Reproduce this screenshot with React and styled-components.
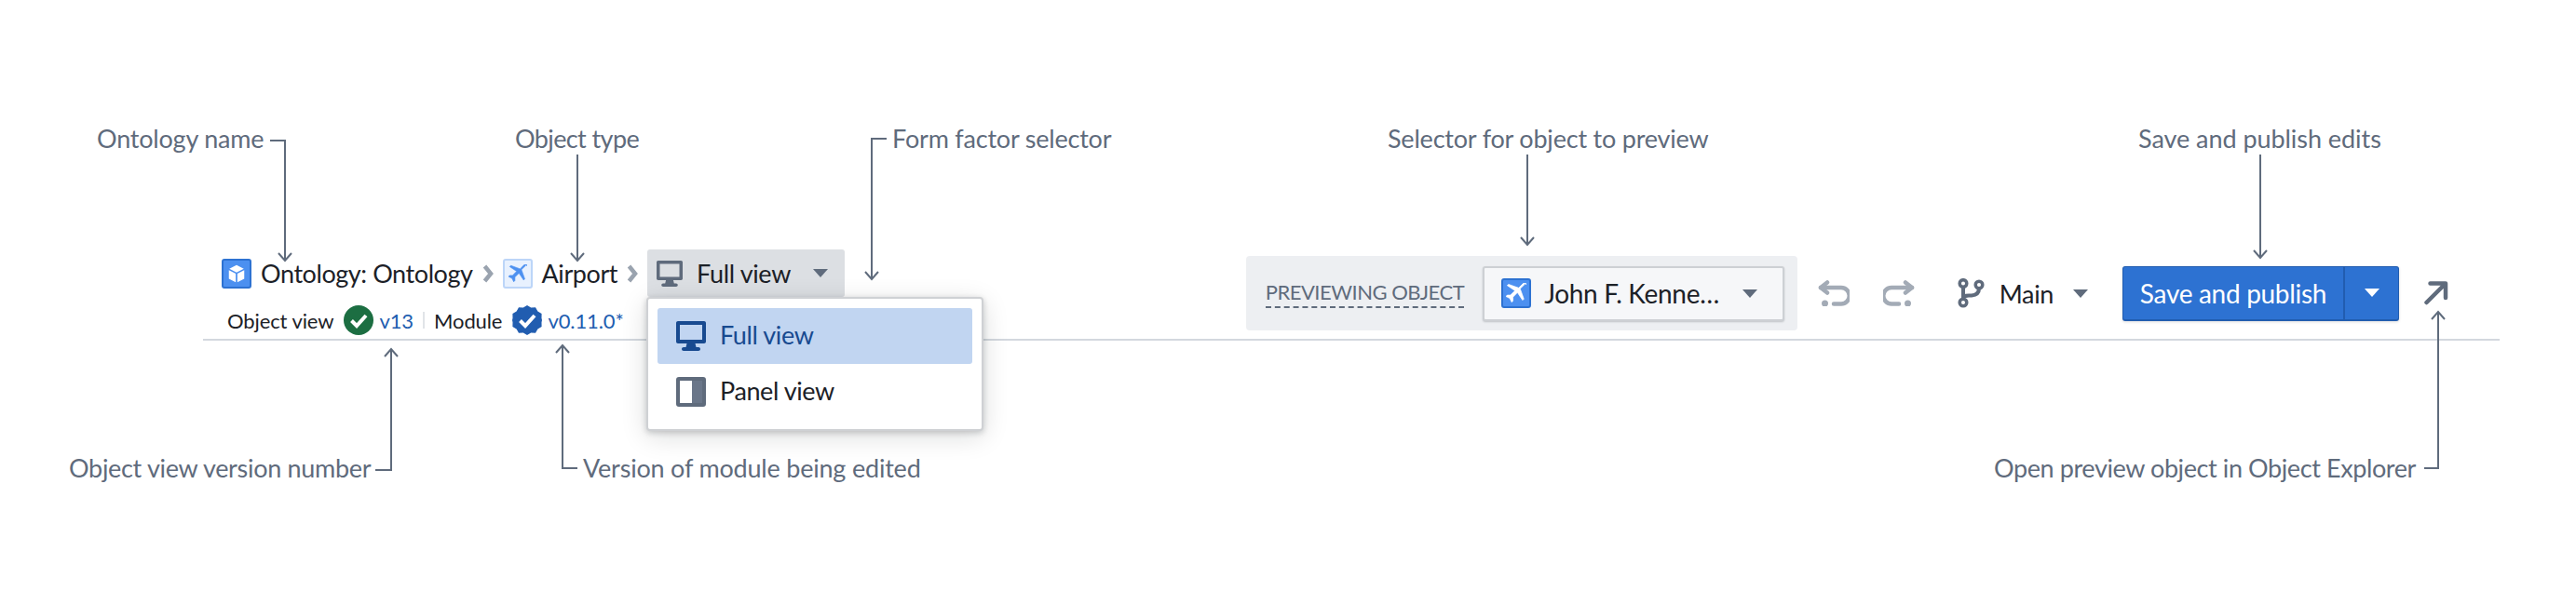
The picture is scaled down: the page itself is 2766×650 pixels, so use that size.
import React from "react";
import styled, { createGlobalStyle } from "styled-components";

const Global = createGlobalStyle`
  html, body { margin: 0; padding: 0; background: #fff; }
  body { font-family: "Lato", "Noto Sans", sans-serif; color: #1c2127; }
`;

const Stage = styled.div`
  position: relative;
  width: 2766px;
  height: 650px;
  overflow: hidden;
  background: #fff;
  padding-top: 268px;
  box-sizing: border-box;
`;

const Toolbar = styled.header`
  display: flex;
  align-items: center;
  justify-content: space-between;
  box-sizing: border-box;
  width: 2466px;
  height: 98px;
  margin-left: 218px;
  padding: 0 55px 0 20px;
  border-bottom: 2px solid #d3d8de;
`;

const LeftColumn = styled.div`
  position: relative;
  display: flex;
  flex-direction: column;
  height: 100%;
`;

const Crumbs = styled.div`
  display: flex;
  align-items: center;
  height: 51px;
`;

const Crumb = styled.span`
  font-size: 27px;
  margin-left: 10px;
  letter-spacing: -0.42px;
  white-space: nowrap;
`;

const Chevron = styled.svg`
  width: 12px;
  height: 20px;
  margin: 0 10px 0 10px;
  flex: none;
`;

const ObjectIcon = styled.span`
  display: inline-flex;
  align-items: center;
  justify-content: center;
  flex: none;
  box-sizing: border-box;
  width: 32px;
  height: 32px;
  border-radius: 3px;
  background: ${(p) => (p.$light ? "#e8f1fe" : "#4c90f0")};
  border: 2px solid ${(p) => (p.$light ? "#bcd5f8" : "#2d72d2")};
  svg { display: block; }
`;

const FormButton = styled.div`
  display: flex;
  align-items: center;
  box-sizing: border-box;
  width: 212px;
  height: 51px;
  padding-left: 10px;
  border-radius: 3px;
  background: #dcdfe3;
  font-size: 27px;
  letter-spacing: -0.35px;
`;

const FormLabel = styled.span`
  margin-left: 15px;
  margin-right: 24px;
  white-space: nowrap;
`;

const Caret = styled.i`
  display: block;
  flex: none;
  width: 0;
  height: 0;
  border-left: 8.5px solid transparent;
  border-right: 8.5px solid transparent;
  border-top: 9px solid ${(p) => p.$color || "#5f6b7c"};
`;

const Meta = styled.div`
  display: flex;
  align-items: center;
  height: 32px;
  margin-top: 9px;
  padding-left: 6px;
  font-size: 22px;
  letter-spacing: -0.1px;
  white-space: nowrap;
`;

const MetaIcon = styled.svg`
  width: 32px;
  height: 32px;
  margin: 0 6px 0 11px;
  flex: none;
`;

const Version = styled.span`
  color: #215db0;
`;

const MetaRule = styled.span`
  width: 2px;
  height: 18px;
  margin: 0 10px;
  background: #e1e4e8;
`;

const Menu = styled.div`
  position: absolute;
  left: 456px;
  top: 51px;
  box-sizing: border-box;
  width: 362px;
  height: 144px;
  padding: 10px;
  border-radius: 4px;
  background: #fff;
  border: 2px solid #cfd1d4;
  box-shadow: 0 2px 6px rgba(17, 20, 24, 0.2), 0 6px 28px rgba(17, 20, 24, 0.14);
`;

const MenuItem = styled.div`
  display: flex;
  align-items: center;
  box-sizing: border-box;
  height: 60px;
  padding-left: 20px;
  gap: 15px;
  border-radius: 3px;
  font-size: 27px;
  letter-spacing: -0.4px;
  color: ${(p) => (p.$active ? "#184a90" : "#1c2127")};
  background: ${(p) => (p.$active ? "#c1d5f1" : "transparent")};
`;

const MenuLabel = styled.span`
  margin-bottom: 3px;
`;

const RightGroup = styled.div`
  display: flex;
  align-items: center;
  height: 100%;
  padding-bottom: 2px;
  box-sizing: border-box;
`;

const Preview = styled.div`
  display: flex;
  align-items: center;
  box-sizing: border-box;
  width: 592px;
  height: 80px;
  padding: 0 14px 0 21px;
  border-radius: 4px;
  background: #edeff2;
`;

const PreviewLabel = styled.span`
  font-size: 22px;
  color: #5f6b7c;
  letter-spacing: -0.5px;
  white-space: nowrap;
  border-bottom: 2px dashed #5f6b7c;
  padding-bottom: 2px;
  margin-right: 20px;
`;

const ObjectSelect = styled.div`
  display: flex;
  align-items: center;
  flex: 1;
  box-sizing: border-box;
  height: 59px;
  padding: 0 27px 0 18px;
  border-radius: 3px;
  background: #f6f7f9;
  border: 2px solid #cdd0d4;
  box-shadow: 0 1px 2px rgba(17, 20, 24, 0.2);
`;

const SelectValue = styled.span`
  flex: 1;
  margin-left: 14px;
  font-size: 28px;
  letter-spacing: -0.3px;
  white-space: nowrap;
`;

const HistoryIcon = styled.svg`
  width: 34px;
  height: 28px;
  margin-left: ${(p) => p.$gap}px;
  flex: none;
`;

const BranchIcon = styled.svg`
  width: 29px;
  height: 32px;
  margin-left: 46px;
  flex: none;
`;

const BranchLabel = styled.span`
  margin: 0 21px 0 16px;
  font-size: 27px;
  letter-spacing: -0.35px;
`;

const SaveButton = styled.div`
  display: flex;
  align-items: stretch;
  box-sizing: border-box;
  width: 297px;
  height: 59px;
  margin-left: 37px;
  border-radius: 3px;
  background: #2d72d2;
  border: 1px solid #215db0;
  border-bottom-width: 2px;
  color: #fff;
  font-size: 28px;
  letter-spacing: -0.3px;
  box-shadow: 0 1px 3px rgba(17, 20, 24, 0.15);
`;

const SaveLabel = styled.span`
  display: flex;
  align-items: center;
  justify-content: center;
  width: 236px;
  border-right: 2px solid #215db0;
  white-space: nowrap;
`;

const SaveCaret = styled.span`
  display: flex;
  align-items: center;
  justify-content: center;
  flex: 1;
`;

const OpenIcon = styled.svg`
  width: 26px;
  height: 26px;
  margin-left: 27px;
  flex: none;
`;

const Notes = styled.svg`
  position: absolute;
  left: 0;
  top: 0;
  width: 2766px;
  height: 650px;
  pointer-events: none;
`;

const Note = styled.span`
  position: absolute;
  left: ${(p) => p.$x}px;
  top: ${(p) => p.$y}px;
  font-size: 27px;
  line-height: 32px;
  color: #5f6b7c;
  letter-spacing: ${(p) => p.$track ?? -0.2}px;
  white-space: nowrap;
`;

const Desktop = ({ size, color }) => (
  <svg width={size} height={size} viewBox="0 0 16 16" fill={color} style={{ flex: "none" }}>
    <path d="M15 0H1C.45 0 0 .45 0 1v10c0 .55.45 1 1 1h4.75l-.5 2H4c-.55 0-1 .45-1 1s.45 1 1 1h8c.55 0 1-.45 1-1s-.45-1-1-1h-1.25l-.5-2H15c.55 0 1-.45 1-1V1c0-.55-.45-1-1-1zm-1 10H2V2h12v8z" />
  </svg>
);

const Plane = ({ size, color }) => (
  <svg width={size} height={size} viewBox="0 0 16 16" fill={color} stroke={color} strokeWidth="0.5">
    <path d="M16 1.5A1.5 1.5 0 0014.5 0c-.4 0-.8.2-1.1.4L10 3.9 2 1 1 2l6 4-3.5 3.5H1L0 10.5l3 1.5 1.5 3 1-1V11L9 7.5l4 6 1-1-2.9-8 3.5-3.4c.2-.3.4-.7.4-1.1z" />
  </svg>
);

const Leader = ({ d }) => (
  <path d={d} fill="none" stroke="#5f6b7c" strokeWidth="2" />
);

const downHead = (x, y) => `M${x - 7} ${y - 8}L${x} ${y}L${x + 7} ${y - 8}`;
const upHead = (x, y) => `M${x - 7} ${y + 8}L${x} ${y}L${x + 7} ${y + 8}`;

const chevron = "M2.5 2L9 10L2.5 18";

export default function App() {
  return (
    <>
      <Global />
      <Stage>
        <Toolbar>
          <LeftColumn>
            <Crumbs>
              <ObjectIcon>
                <svg width="20" height="20" viewBox="0 0 16 16">
                  <path d="M8 .6l6.2 3.2L8 7 1.8 3.8z" fill="#fff" />
                  <path d="M1.4 5l5.9 3v7.3l-5.9-3zM14.6 5L8.7 8v7.3l5.9-3z" fill="#fff" />
                </svg>
              </ObjectIcon>
              <Crumb>Ontology: Ontology</Crumb>
              <Chevron viewBox="0 0 12 20">
                <path d={chevron} fill="none" stroke="#9aa3af" strokeWidth="4.5" />
              </Chevron>
              <ObjectIcon $light>
                <Plane size={20} color="#4c90f0" />
              </ObjectIcon>
              <Crumb>Airport</Crumb>
              <Chevron viewBox="0 0 12 20">
                <path d={chevron} fill="none" stroke="#9aa3af" strokeWidth="4.5" />
              </Chevron>
              <FormButton>
                <Desktop size={28} color="#5f6b7c" />
                <FormLabel>Full view</FormLabel>
                <Caret />
              </FormButton>
            </Crumbs>
            <Meta>
              Object view
              <MetaIcon viewBox="0 0 32 32">
                <circle cx="16" cy="16" r="16" fill="#1c6e42" />
                <path d="M8.500 16.500l5.500 5.500 10-11" fill="none" stroke="#fff" strokeWidth="4" />
              </MetaIcon>
              <Version>v13</Version>
              <MetaRule />
              Module
              <MetaIcon viewBox="0 0 32 32">
                <path
                  d="M16 0l4.200 2.400 4.800-.1 2.400 4.200 4.200 2.400-.1 4.800L32 16l-.5 2.300.1 4.800-4.200 2.400-2.400 4.200-4.800-.1L16 32l-4.200-2.400-4.800.1-2.400-4.200-4.200-2.400.1-4.800L0 16l.5-2.300-.1-4.800 4.200-2.400L7 2.300l4.800.1z"
                  fill="#215db0"
                />
                <path d="M8.500 16.500l5.500 5.500 10-11" fill="none" stroke="#fff" strokeWidth="4" />
              </MetaIcon>
              <Version>v0.11.0*</Version>
            </Meta>
            <Menu>
              <MenuItem $active>
                <Desktop size={32} color="#184a90" />
                <MenuLabel>Full view</MenuLabel>
              </MenuItem>
              <MenuItem>
                <svg width="32" height="32" viewBox="0 0 32 32" style={{ flex: "none" }}>
                  <rect x="2" y="2" width="28" height="28" rx="1" fill="#fff" stroke="#5f6b7c" strokeWidth="4" />
                  <rect x="17" y="4" width="11" height="24" fill="#6a7689" />
                </svg>
                <MenuLabel>Panel view</MenuLabel>
              </MenuItem>
            </Menu>
          </LeftColumn>
          <RightGroup>
            <Preview>
              <PreviewLabel>PREVIEWING OBJECT</PreviewLabel>
              <ObjectSelect>
                <ObjectIcon>
                  <Plane size={22} color="#fff" />
                </ObjectIcon>
                <SelectValue>John F. Kenne…</SelectValue>
                <Caret />
              </ObjectSelect>
            </Preview>
            <HistoryIcon $gap={22} viewBox="0 0 34 28">
              <g fill="none" stroke="#a3abb6" strokeWidth="4.500" strokeLinecap="round" strokeLinejoin="round">
                <path d="M10 2.500L3 8l7 5.500" />
                <path d="M3 8h22a6.500 6.500 0 010 17.500h-8" />
              </g>
              <circle cx="7.500" cy="25" r="3.500" fill="#a3abb6" />
            </HistoryIcon>
            <HistoryIcon $gap={36} viewBox="0 0 34 28">
              <g fill="none" stroke="#a3abb6" strokeWidth="4.500" strokeLinecap="round" strokeLinejoin="round">
                <path d="M24 2.500L31 8l-7 5.500" />
                <path d="M31 8H9a6.500 6.500 0 000 17.500h8" />
              </g>
              <circle cx="26.500" cy="25" r="3.500" fill="#a3abb6" />
            </HistoryIcon>
            <BranchIcon viewBox="0 0 29 32">
              <g fill="none" stroke="#5f6b7c" strokeWidth="3.500">
                <circle cx="6" cy="5.500" r="3.800" />
                <circle cx="23" cy="7" r="3.800" />
                <circle cx="6" cy="26" r="3.800" />
                <path d="M6 9.500v12.500" strokeWidth="4" />
                <path d="M23 11c0 5-3 7-8 7.500h-3c-3 0-6 1-6 3.500" strokeWidth="4" />
              </g>
            </BranchIcon>
            <BranchLabel>Main</BranchLabel>
            <Caret />
            <SaveButton>
              <SaveLabel>Save and publish</SaveLabel>
              <SaveCaret>
                <Caret $color="#fff" />
              </SaveCaret>
            </SaveButton>
            <OpenIcon viewBox="0 0 26 26">
              <path d="M6.500 2.500H23V18M22.500 3L2.500 23" fill="none" stroke="#5f6b7c" strokeWidth="4.500" strokeLinecap="round" strokeLinejoin="round" />
            </OpenIcon>
          </RightGroup>
        </Toolbar>

        <Notes viewBox="0 0 2766 650">
          <Leader d="M290 151H306V279" />
          <Leader d={downHead(306, 280)} />
          <Leader d="M620 166V279" />
          <Leader d={downHead(620, 280)} />
          <Leader d="M952 149H936V299" />
          <Leader d={downHead(936, 300)} />
          <Leader d="M1640 166V262" />
          <Leader d={downHead(1640, 263)} />
          <Leader d="M2427 166V276" />
          <Leader d={downHead(2427, 277)} />
          <Leader d="M420 376V505H403" />
          <Leader d={upHead(420, 375)} />
          <Leader d="M604 372V503H620" />
          <Leader d={upHead(604, 371)} />
          <Leader d="M2618 336V503H2603" />
          <Leader d={upHead(2618, 335)} />
        </Notes>
        <Note $x={104} $y={133}>Ontology name</Note>
        <Note $x={553} $y={133} $track={-0.6}>Object type</Note>
        <Note $x={958} $y={133}>Form factor selector</Note>
        <Note $x={1490} $y={133}>Selector for object to preview</Note>
        <Note $x={2296} $y={133} $track={-0.05}>Save and publish edits</Note>
        <Note $x={74} $y={487} $track={-0.3}>Object view version number</Note>
        <Note $x={626} $y={487}>Version of module being edited</Note>
        <Note $x={2141} $y={487} $track={-0.4}>Open preview object in Object Explorer</Note>
      </Stage>
    </>
  );
}
